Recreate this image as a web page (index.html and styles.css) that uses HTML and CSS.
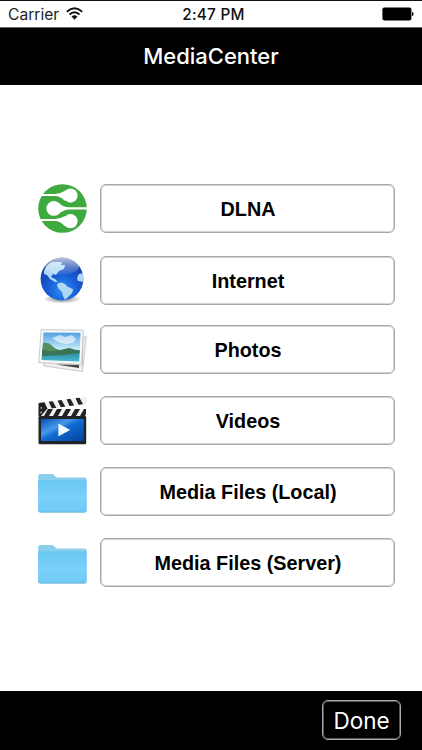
FILE: index.html
```
<!DOCTYPE html>
<html lang="en">
<head>
  <meta charset="UTF-8">
  <meta name="viewport" content="width=device-width, initial-scale=1">
  <title>MediaCenter</title>
  <link rel="stylesheet" href="styles.css">
</head>
<body>
  <div class="status-bar">
    <div class="carrier">
      <span>Carrier</span>
      <svg class="wifi" viewBox="0 0 16 12" aria-hidden="true">
        <path d="M.8 4.3Q8-2 15.2 4.3M3.3 6.9Q8 2.7 12.7 6.9" fill="none" stroke="#111" stroke-width="1.8"/>
        <path d="M5.2 8.9Q8 6.4 10.8 8.9L8 11.8Z" fill="#111"/>
      </svg>
    </div>
    <span class="time">2:47 PM</span>
    <svg class="battery" viewBox="0 0 32 14" aria-hidden="true">
      <rect x=".4" y=".6" width="29" height="12.8" rx="1.8"/>
      <path d="M30 5Q31.6 5.2 31.6 7T30 9Z"/>
    </svg>
  </div>
  <header class="title-bar"><h1>MediaCenter</h1></header>
  <main>
    <ul class="menu">
      <li>
        <svg class="icon" viewBox="0 0 49 49" aria-hidden="true">
          <circle cx="24.5" cy="24.5" r="24.3" fill="#3eaa3e"/>
          <g fill="#fff">
            <circle cx="32.5" cy="11.6" r="7.1"/>
            <circle cx="15.8" cy="24.4" r="7.4"/>
            <circle cx="32.5" cy="37.2" r="7.1"/>
            <path d="M0 10H17Q22 10 27 6.8V17Q22 11.9 17 11.9H0Z"/>
            <path d="M49 23.3H31Q26 23.3 20 18.4V30.4Q26 25.5 31 25.5H49Z"/>
            <path d="M0 34.9H17Q22 34.9 27 32V42.2Q22 37 17 37H0Z"/>
          </g>
        </svg>
        <button type="button">DLNA</button>
      </li>
      <li>
        <svg class="icon" viewBox="0 0 49 49" aria-hidden="true">
          <defs>
            <radialGradient id="ocean" cx=".52" cy=".75" r=".72">
              <stop offset="0" stop-color="#2f8ff5"/>
              <stop offset=".5" stop-color="#175bd6"/>
              <stop offset=".85" stop-color="#1843ae"/>
              <stop offset="1" stop-color="#34549f"/>
            </radialGradient>
            <linearGradient id="gloss" x2="0" y2="1">
              <stop offset="0" stop-color="#fff" stop-opacity=".65"/>
              <stop offset="1" stop-color="#fff" stop-opacity=".05"/>
            </linearGradient>
            <radialGradient id="shade">
              <stop offset="0" stop-color="#444" stop-opacity=".75"/>
              <stop offset="1" stop-color="#444" stop-opacity="0"/>
            </radialGradient>
            <clipPath id="globe"><circle cx="24" cy="23" r="21.4"/></clipPath>
          </defs>
          <ellipse cx="24" cy="43" rx="19" ry="4.5" fill="url(#shade)"/>
          <circle cx="24" cy="23" r="21.4" fill="url(#ocean)"/>
          <g clip-path="url(#globe)">
            <g fill="#b0d7f5">
              <path d="M6 15Q8 9 14 6L24 6 23 9 27 9 26 13 21 15 18 19 15 18 13 21 17 23 20 26 17 26 12 23 9 19 6 18Z"/>
              <path d="M19 28Q23 25 27 28L30 31 35 33Q35 37 31 40L27 44 25 40 24 36 20 32Z"/>
              <path d="M46 17L41 18 39 22 40 25 46 26Z"/>
            </g>
            <ellipse cx="24" cy="10" rx="17" ry="9" fill="url(#gloss)"/>
          </g>
        </svg>
        <button type="button">Internet</button>
      </li>
      <li>
        <svg class="icon" viewBox="0 0 49 49" aria-hidden="true">
          <defs>
            <linearGradient id="sky" x2="0" y2="1">
              <stop offset="0" stop-color="#4f9fe2"/>
              <stop offset=".6" stop-color="#cdeef7"/>
            </linearGradient>
            <linearGradient id="lake" x2="0" y2="1">
              <stop offset="0" stop-color="#247c98"/>
              <stop offset="1" stop-color="#4ab8cf"/>
            </linearGradient>
          </defs>
          <path d="M8 14L48.5 11.5 45 42 6 36Z" fill="#e8e8e8" stroke="#c4c4c4" stroke-width=".7"/>
          <path d="M5 13L44 8 44.8 46.6 6 41Z" fill="#f0f0f0" stroke="#b5b5b5" stroke-width=".7"/>
          <path d="M18 39.5L41 39.8 41 43Z" fill="#454949"/>
          <path d="M3.2 4.7L45.4 5.2 43.6 39.4 .8 37.6Z" fill="#f8f8f8" stroke="#bdbdbd" stroke-width=".8"/>
          <path d="M5.5 7.4L42.6 7.7 41.2 36.4 3.6 35Z" fill="url(#sky)"/>
          <path d="M14 13L22 10 27 12 34 10 38 14 35 18 27 19 20 17Z" fill="#fff" opacity=".6"/>
          <path d="M4.2 25L41.7 25 41.2 36.4 3.6 35Z" fill="url(#lake)"/>
          <path d="M5 18Q10 17 14 21T22 25L31 23 41.7 26V28L24 30 4 31Z" fill="#397454"/>
          <path d="M5 18Q10 17 14 21T22 25Q13 27 4.6 25Z" fill="#56905f"/>
        </svg>
        <button type="button">Photos</button>
      </li>
      <li>
        <svg class="icon" viewBox="0 0 49 49" aria-hidden="true">
          <defs>
            <linearGradient id="screen" x2="1" y2="1">
              <stop offset="0" stop-color="#0751b4"/>
              <stop offset=".35" stop-color="#4698eb"/>
              <stop offset=".5" stop-color="#0f6bd2"/>
              <stop offset="1" stop-color="#06419b"/>
            </linearGradient>
            <clipPath id="arm"><path d="M.5 7L48.5 .8V7.8L2 14Z"/></clipPath>
            <clipPath id="slate"><path d="M.5 13H48V20H.5Z"/></clipPath>
          </defs>
          <g clip-path="url(#arm)">
            <path d="M0 0H49V15H0Z" fill="#f1f1f1"/>
            <path d="M0 5H6L10 14H4ZM10 4H14L19 13H14ZM19 3H23L28 12H23ZM28 2H32L37 11H32ZM37 1H41L46 10H41Z" fill="#222"/>
          </g>
          <g clip-path="url(#slate)">
            <path d="M0 13H49V20H0Z" fill="#f1f1f1"/>
            <path d="M10 13H15L11 20H6ZM19 13H24L20 20H15ZM28 13H33L29 20H24ZM37 13H42L38 20H33ZM46 13H50L47 20H42Z" fill="#222"/>
          </g>
          <path d="M.5 7L9 13 3 20H.5Z" fill="#222"/>
          <circle cx="3.2" cy="11.8" r=".9" fill="#aaa"/>
          <circle cx="3.2" cy="16.5" r=".9" fill="#aaa"/>
          <rect x=".5" y="20" width="47.7" height="28.2" rx="1.2" fill="#202327"/>
          <rect x="3" y="23" width="42.8" height="22" fill="url(#screen)"/>
          <path d="M20.4 27.5V40.3L32.2 34Z" fill="#f3faff"/>
        </svg>
        <button type="button">Videos</button>
      </li>
      <li>
        <svg class="icon" viewBox="0 0 49 49" aria-hidden="true">
          <defs>
            <linearGradient id="folder" x2="0" y2="1">
              <stop offset="0" stop-color="#68c7f1"/>
              <stop offset=".55" stop-color="#7ad1fa"/>
              <stop offset="1" stop-color="#6ecaf5"/>
            </linearGradient>
          </defs>
          <g id="folder-shape">
            <path d="M.2 43V8.7Q.2 7 2 7H13.5Q15 7 16 8L18 10Q18.7 10.6 20 10.6H46.8Q48.6 10.6 48.6 12.4V43Z" fill="#8ccfed"/>
            <path d="M.2 13.2H48.6V43.4Q48.6 45.2 46.8 45.2H2Q.2 45.2 .2 43.4Z" fill="url(#folder)"/>
            <path d="M.6 44Q1 45.2 2.2 45.2H46.8Q48 45.2 48.3 44" fill="none" stroke="#65aecf" stroke-width=".8"/>
          </g>
        </svg>
        <button type="button">Media Files (Local)</button>
      </li>
      <li>
        <svg class="icon" viewBox="0 0 49 49" aria-hidden="true"><use href="#folder-shape"/></svg>
        <button type="button">Media Files (Server)</button>
      </li>
    </ul>
  </main>
  <footer><button type="button" class="done">Done</button></footer>
</body>
</html>
```
FILE: styles.css
```
* {
  box-sizing: border-box;
}
body {
  margin: 0;
  height: 750px;
  display: flex;
  flex-direction: column;
  background: #fff;
  color: #000;
  font-family: Inter, "Liberation Sans", sans-serif;
  overflow: hidden;
}

/* Status bar */
.status-bar {
  height: 28px;
  flex: none;
  display: grid;
  grid-template-columns: 1fr auto 1fr;
  align-items: center;
  padding: 1px 8px 0;
  border-top: 1px solid #111;
  border-bottom: 1px solid #666;
}
.carrier {
  display: flex;
  align-items: center;
  gap: 7px;
  font-size: 15.6px;
  color: #222;
}
.wifi {
  width: 17px;
  height: 13px;
  margin-top: -2px;
}
.time {
  font-size: 15.3px;
  font-weight: 500;
  letter-spacing: .25px;
  color: #111;
  padding-left: 5px;
}
.battery {
  width: 32px;
  height: 14px;
  margin-top: -1px;
  justify-self: end;
}

.title-bar {
  height: 57px;
  flex: none;
  display: flex;
  align-items: center;
  justify-content: center;
  padding-bottom: 2px;
  background: #000;
  color: #fff;
}
h1 {
  margin: 0;
  font-size: 22px;
  font-weight: 500;
}

/* Menu */
main {
  flex: 1;
  padding: 99px 27px 0 38px;
}
.menu {
  list-style: none;
  margin: 0;
  padding: 0;
  display: flex;
  flex-direction: column;
  gap: 22px;
}
.menu li {
  height: 49px;
  display: flex;
  gap: 13px;
}
.menu li:nth-child(2) {
  margin: 1px 0 -2px;
}
.icon {
  width: 49px;
  height: 49px;
  flex: none;
  margin-left: -.5px;
  margin-right: .5px;
}
.menu button {
  flex: 1;
  padding: 1px 0 0 1px;
  border: 1px solid #a8a8a8;
  border-radius: 6px;
  box-shadow: inset 0 0 0 1px #d4d4d4;
  background: #fff;
  color: #000;
  font: bold 19.8px "Liberation Sans", sans-serif;
}

footer {
  height: 59px;
  flex: none;
  display: flex;
  justify-content: flex-end;
  padding: 9px 21px 0 0;
  background: #000;
}
.done {
  width: 79px;
  height: 40px;
  padding: 0;
  border: 1px solid #aaa;
  border-radius: 6px;
  box-shadow: inset 0 0 0 1px #555;
  background: #000;
  color: #fff;
  font: 22.5px Inter, sans-serif;
}
```
